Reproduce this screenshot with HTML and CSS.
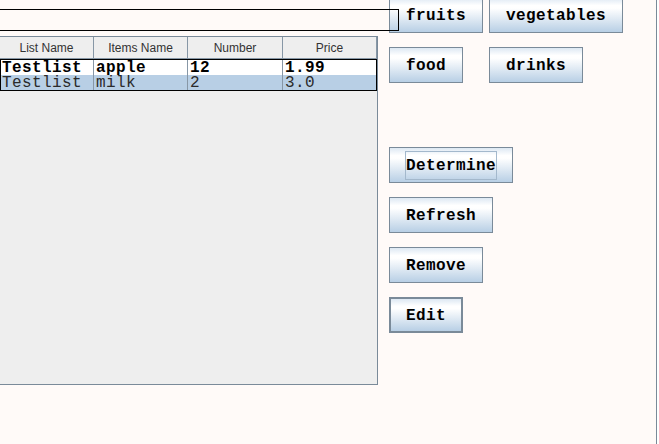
FILE: index.html
```html
<!DOCTYPE html>
<html>
<head>
<meta charset="utf-8">
<link rel="stylesheet" href="styles.css">
</head>
<body>
<div class="frame">
  <div class="left">
    <div class="textfield"></div>
    <div class="pane">
      <div class="header">
        <div class="hcell c1">List Name</div>
        <div class="hcell c2">Items Name</div>
        <div class="hcell c3">Number</div>
        <div class="hcell c4">Price</div>
      </div>
      <div class="rows">
        <div class="row sel">
          <div class="cell c1">Testlist</div>
          <div class="cell c2">apple</div>
          <div class="cell c3">12</div>
          <div class="cell c4">1.99</div>
        </div>
        <div class="row alt">
          <div class="cell c1">Testlist</div>
          <div class="cell c2">milk</div>
          <div class="cell c3">2</div>
          <div class="cell c4">3.0</div>
        </div>
      </div>
    </div>
  </div>
  <div class="right">
    <button class="btn">fruits</button>
    <button class="btn">vegetables</button>
    <button class="btn">food</button>
    <button class="btn">drinks</button>
    <div class="spacer"></div>
    <button class="btn wide"><span class="focus">Determine</span></button>
    <button class="btn wide">Refresh</button>
    <button class="btn wide">Remove</button>
    <button class="btn wide default">Edit</button>
  </div>
</div>
</body>
</html>
```

FILE: styles.css
```css
html, body {
  margin: 0;
  padding: 0;
  background: #ffffff;
  overflow: hidden;
}

.frame {
  width: 657px;
  height: 444px;
  box-sizing: border-box;
  border-right: 1px solid #7a8a99;
  background: #fffaf8;
  display: flex;
  align-items: flex-start;
  overflow: hidden;
}

.left {
  width: 378px;
  flex: none;
  padding-top: 9px;
  display: flex;
  flex-direction: column;
}

.textfield {
  position: relative;
  z-index: 2;
  margin-left: -2px;
  width: 401px;
  height: 22px;
  box-sizing: border-box;
  border: 1px solid #000000;
  flex: none;
}

.pane {
  margin-top: 5px;
  margin-left: -1px;
  width: 379px;
  height: 349px;
  box-sizing: border-box;
  border: 1px solid #7a8a99;
  background: #eeeeee;
}

.header {
  display: flex;
  height: 22px;
  box-sizing: border-box;
  border-bottom: 1px solid #8797a6;
}

.hcell {
  box-sizing: border-box;
  border-right: 1px solid #8797a6;
  background: #eeeeee;
  font-family: "Liberation Sans", Arial, sans-serif;
  font-size: 12px;
  color: #333333;
  text-align: center;
  line-height: 22px;
}

.header .c1 { width: 94px; }
.header .c2 { width: 94px; }
.header .c3 { width: 95px; }
.header .c4 { width: 94px; }

.rows {
  width: 377px;
  box-sizing: border-box;
  border: 1px solid #000000;
}

.row {
  display: flex;
  height: 15px;
}

.row.sel {
  background: #ffffff;
  color: #000000;
  font-weight: bold;
}

.row.alt {
  background: #b8cfe5;
  color: #2b2b2b;
  font-weight: normal;
}

.cell {
  box-sizing: border-box;
  height: 15px;
  border-right: 1px solid #8797a6;
  padding-left: 1px;
  font-family: "Liberation Mono", "Courier New", monospace;
  font-size: 16px;
  letter-spacing: 0.4px;
  line-height: 16px;
  white-space: nowrap;
}

.rows .c1 { width: 93px; padding-left: 1px; }
.rows .c2 { width: 94px; padding-left: 2px; }
.rows .c3 { width: 95px; padding-left: 2px; }
.rows .c4 { width: 93px; border-right: none; padding-left: 2px; }

.right {
  margin-left: 11px;
  margin-top: -3px;
  display: grid;
  grid-template-columns: 100px 100px;
  grid-auto-rows: 36px;
  row-gap: 14px;
  justify-items: start;
}

.spacer {
  grid-column: 1 / span 2;
}

.btn {
  height: 36px;
  box-sizing: border-box;
  margin: 0;
  padding: 2px 16px 0;
  border: 1px solid #7a8a99;
  background: linear-gradient(to bottom, #dde8f3 0%, #ffffff 22%, #ffffff 30%, #b8cfe5 100%);
  font-family: "Liberation Mono", "Courier New", monospace;
  font-size: 16px;
  letter-spacing: 0.4px;
  font-weight: bold;
  color: #000000;
  display: flex;
  align-items: center;
  justify-content: center;
  white-space: nowrap;
}

.btn.wide {
  grid-column: 1 / span 2;
}

.btn.default {
  border: 2px solid #7a8a99;
  padding: 1px 15px 0;
}

.focus {
  border: 1px solid #a3b8cc;
  margin: -2px -1px 0;
  padding-top: 2px;
  line-height: 25px;
}
```
